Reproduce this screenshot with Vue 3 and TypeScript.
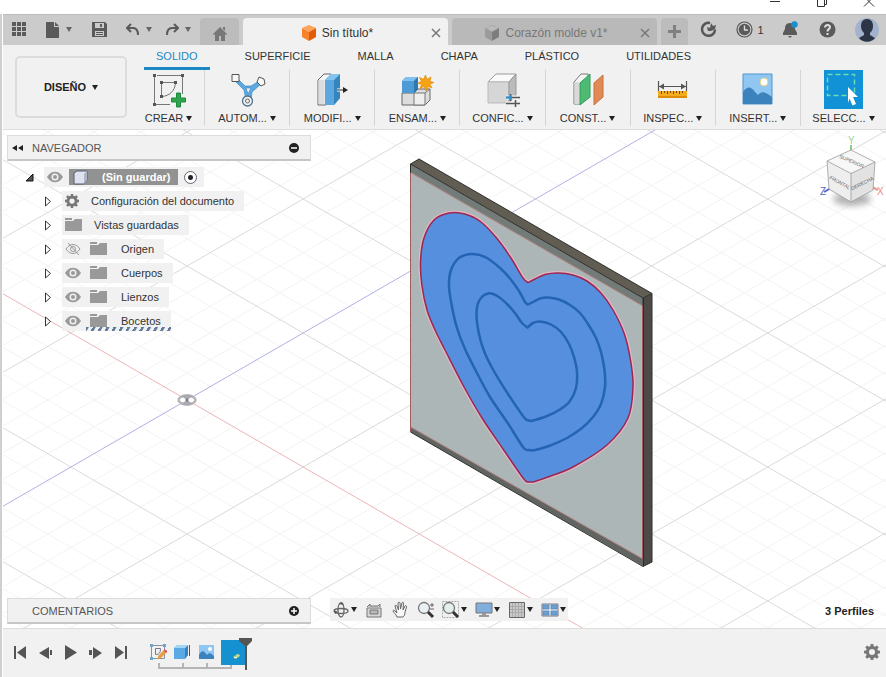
<script setup lang="ts">
import { ref } from 'vue'

interface Tool { label: string; icon: string }
interface Row { label: string; kind: 'gear' | 'folder'; eye?: 'on' | 'off'; gap: string; dashed?: boolean }
interface Icon { name: string; art: string; menu?: boolean }
type Point = [number, number]

const ribbonTabs: string[] = ['SOLIDO', 'SUPERFICIE', 'MALLA', 'CHAPA', 'PLÁSTICO', 'UTILIDADES']
const activeTab = ref('SOLIDO')
const rootActive = ref(true)

const gearArt =
  '<path fill-rule="evenodd" d="M6.700 0h2.600l.4 2.200 1.300.5 1.900-1.300 1.800 1.800-1.300 1.900.5 1.300 2.100.3v2.600l-2.100.4-.5 1.300 1.300 1.900-1.800 1.800-1.900-1.300-1.300.5L9.300 16H6.700l-.4-2.100-1.300-.5-1.900 1.300-1.800-1.800 1.300-1.900-.5-1.300L0 9.300V6.700l2.100-.3.5-1.300-1.300-1.900 1.800-1.800L5 2.700l1.300-.5zM8 5a3 3 0 1 0 0 6 3 3 0 0 0 0-6z"/>'

const tools: Tool[] = [
  {
    label: 'CREAR',
    icon: '<g fill="none" stroke="#777" stroke-width="1"><path d="M6.500 6v28M9 5.500h24M34.500 7v17M7 34.500h15M13.500 13v12M14 12.500h13M27.500 13C27 21 21 26 14 26.500"/></g><g fill="#555"><path d="M5 4h3v3H5zM33 4h3v3h-3zM5 33h3v3H5zM12 11h3v3h-3zM26 11h3v3h-3zM12 25h3v3h-3z"/></g><path d="M28.500 23h4v5h5v4h-5v5h-4v-5h-5v-4h5z" fill="#2ea44f" stroke="#1c8a3b"/>',
  },
  {
    label: 'AUTOM',
    icon: '<path d="M9 7l9 9h6l8-5 2 3-9 8-1 8h-5l-2-10L7 10zM19 18l2 6 3-6z" fill="#5ba9e0" fill-rule="evenodd" stroke="#3c8cc4" stroke-width=".7"/><path d="M5 4.500h7v7H5zM32 7l5 2 1 5-4 2-4-4z" fill="#f7f7f7" stroke="#555"/><circle cx="20.500" cy="31" r="5" fill="#f0f3f6" stroke="#52718a" stroke-width="1.300"/><circle cx="20.500" cy="31" r="2" fill="none" stroke="#666"/>',
  },
  {
    label: 'MODIFI',
    icon: '<path d="M6 10l6-6h7v25l-5 6H6z" fill="#f5f5f5" stroke="#666"/><path d="M6.500 10h6v24h-6z" fill="#dcdcdc"/><path d="M13 10l6-6h9v24l-6 7h-9z" fill="#5ba7df"/><path d="M22 10l6-6v24l-6 7z" fill="#3586bd"/><path d="M13 10l6-6h9l-6 6z" fill="#82c4ef"/><path d="M25 20h8" stroke="#fff" stroke-width="3"/><path d="M25 20h7" stroke="#222"/><path d="M31 17l5 3-5 3z" fill="#222"/>',
  },
  {
    label: 'ENSAM',
    icon: '<path d="M5 23h12l4-4h12v11l-5 5H5z" fill="#ddd" stroke="#666"/><path d="M17 23h11v12H17zM28 23l5-4" fill="#efefef" stroke="#777"/><path d="M5 11l4-4h12v11l-4 5H5z" fill="#4c9bd6"/><path d="M5 11l4-4h12l-4 4z" fill="#7fc0ec"/><path d="M17 11l4-4v12l-4 4z" fill="#2e79af"/><path d="M28.500 5l1.500 4.300 4-2.300-1 4.300 4 1.200-4 1.500 2 4-4-1.500-2 4.500-2-4.500-4 2 1.500-4-4-1.500 4-1.500-2-4 4 1.800z" fill="#f5a313" stroke="#da8705" stroke-width=".6"/>',
  },
  {
    label: 'CONFIC',
    icon: '<path d="M6 12l8-8h20l-7 8z" fill="#fafafa" stroke="#999"/><path d="M6 12h21v21H6z" fill="#d6d6d6" stroke="#bbb"/><path d="M27 12l7-8v21l-7 8z" fill="#bbb" stroke="#999"/><path d="M24 27.500h14M24 33.500h14" stroke="#f1f1f1" stroke-width="4"/><path d="M24 27.500h14M24 33.500h14M28.500 24v7M33.500 30v7" stroke="#555" stroke-width="1.500"/><path d="M24 27.500h6M28.500 25v5" stroke="#2b8cc9" stroke-width="2"/>',
  },
  {
    label: 'CONST',
    icon: '<path d="M7 12l7-8h7v22l-7 8H7z" fill="#f5f5f5" stroke="#777"/><path d="M7.500 12h5v22h-5z" fill="#d9d9d9"/><path d="M13 13l10-9v23l-10 8z" fill="#4dbb73" stroke="#329a56"/><path d="M27 13l9-8v22l-9 8z" fill="#e18a55" stroke="#c9713d"/>',
  },
  {
    label: 'INSPEC',
    icon: '<path d="M6.500 11v11M34.500 11v11M7 16.500h27" fill="none" stroke="#555" stroke-width="1.200"/><path d="M7 16.500l5-3v6zM34 16.500l-5-3v6z" fill="#555"/><path d="M6 21h29v7H6z" fill="#f5ab1e"/><path d="M6 26h29v2H6z" fill="#db8c08"/><path d="M9.500 21v3M12.500 21v2M15.500 21v3M18.500 21v2M21.500 21v3M24.500 21v2M27.500 21v3M30.500 21v2" stroke="#704a00"/>',
  },
  {
    label: 'INSERT',
    icon: '<path d="M6 4h29v30H6z" fill="#8fc7f2" stroke="#4f97cf"/><circle cx="27" cy="12" r="4" fill="#fff" stroke="#e8cf86"/><path d="M6 22c4-6 8-6 12 0l3 3c3-4 7-4 14 2v7H6z" fill="#3c82bd"/>',
  },
  {
    label: 'SELECC',
    icon: '<path d="M1 0h39v39H1z" fill="#1191d6"/><path d="M4.500 4.500h27v21h-27z" fill="none" stroke="#6cdcb5" stroke-width="1.500" stroke-dasharray="5 3"/><path d="M25 17l10 10h-5l3 7-3.500 1.500-3-7L25 33z" fill="#fff"/>',
  },
]

const rows: Row[] = [
  { label: 'Configuración del documento', kind: 'gear', gap: 'wide' },
  { label: 'Vistas guardadas', kind: 'folder', gap: 'wide' },
  { label: 'Origen', kind: 'folder', eye: 'off', gap: 'wider' },
  { label: 'Cuerpos', kind: 'folder', eye: 'on', gap: 'wider' },
  { label: 'Lienzos', kind: 'folder', eye: 'on', gap: 'wider' },
  { label: 'Bocetos', kind: 'folder', eye: 'on', gap: 'wider', dashed: true },
]

const viewTools: Icon[] = [
  { name: 'Órbita', menu: true, art: '<g fill="none" stroke="#666" stroke-width="1.300"><ellipse cx="9" cy="9" rx="3" ry="7"/><ellipse cx="9" cy="10" rx="7" ry="2.500"/></g><path d="M7 3l3-2 2 3zM2 9l1 4 3-2z" fill="#555"/>' },
  { name: 'Mirar a', art: '<path d="M2 7h14v9H2z" fill="#d8d8d8" stroke="#777"/><path d="M5 9h8v4H5z" fill="#b6b6bd" stroke="#777"/><path d="M2 6l3-3v2h8l2-2v3" fill="#ccc" stroke="#777"/>' },
  { name: 'Encuadre', art: '<path d="M6 16c-1-3-3-4-4-6 0-1 1-1 2 0l2 2L4 5c0-1 1-1 2 0l1.500 4L7 2c0-1 2-1 2 0l.5 6 1.500-6c0-1 2-1 1.500.5L12 9l2-4c.5-1 2 0 1.500 1L14 11c0 3-1 4-2 5z" fill="#fafafa" stroke="#666"/>' },
  { name: 'Zoom', art: '<circle cx="7" cy="7" r="5.500" fill="#eaf1f4" stroke="#777" stroke-width="1.300"/><path d="M11 11l5 5" stroke="#333" stroke-width="3"/><path d="M13 4h4M15 2v4M13 8h4" stroke="#666"/>' },
  { name: 'Ajustar', menu: true, art: '<path d="M.5.5h16v16H.5z" fill="none" stroke="#aaa" stroke-dasharray="2 1"/><circle cx="7" cy="7" r="5.500" fill="#e3efee" stroke="#777" stroke-width="1.300"/><path d="M11 11l5 5" stroke="#333" stroke-width="3"/>' },
  { name: 'Visualización', menu: true, art: '<path d="M1 2h16v10H1z" fill="#82aedc" stroke="#777"/><path d="M7 12h4v2h3v2H4v-2h3z" fill="#999"/>' },
  { name: 'Rejilla', menu: true, art: '<path d="M1.500 1.500h15v15h-15z" fill="#c9c9c9" stroke="#666"/><path d="M4.500 2v14M7.500 2v14M10.500 2v14M13.500 2v14M2 5.500h14M2 8.500h14M2 11.500h14" stroke="#aaa"/>' },
  { name: 'Ventanas', menu: true, art: '<path d="M1 3h16v12H1z" fill="#dce4ec" stroke="#778"/><path d="M2 4h6v4H2zM10 4h6v4h-6zM2 10h6v4H2zM10 10h6v4h-6z" fill="#6f9fd0" stroke="#4d7fae" stroke-width=".6"/>' },
]

const playback: Icon[] = [
  { name: 'Inicio', art: '<path d="M2 2h2v13H2zM14 2v13L5 8.500z"/>' },
  { name: 'Paso atrás', art: '<path d="M12 3v12L2 9zM13 6h2v5h-2z"/>' },
  { name: 'Reproducir', art: '<path d="M3 1v15l12-7.500z"/>' },
  { name: 'Paso adelante', art: '<path d="M6 3v12l9-6zM2 6h3v5H2z"/>' },
  { name: 'Final', art: '<path d="M3 2v13l9-6.500zM13 2h2v13h-2z"/>' },
]

const features: Icon[] = [
  { name: 'Boceto', art: '<path d="M2.500 2.500h13v13h-13z" fill="none" stroke="#8593a5"/><path d="M1 1h3v3H1zM14 1h3v3h-3zM1 14h3v3H1z" fill="#6fa6cc"/><path d="M6.500 5.500h5c0 4-1 6-5 6z" fill="none" stroke="#778"/><path d="M9 13l6-6 3 2-6 6-3 1z" fill="#eb9b42"/><path d="M15 7l3 2" stroke="#d55" stroke-width="2"/>' },
  { name: 'Extrusión', art: '<path d="M1 5l3-3h11l-3 3v11H1z" fill="#5aa9e4"/><path d="M12 5l3-3v10l-3 4z" fill="#3683bd"/><path d="M1 5l3-3h11l-3 3z" fill="#a3d4f4"/><path d="M16.500 2v11" stroke="#555"/>' },
  { name: 'Lienzo', art: '<path d="M2 2h15v14H2z" fill="#8fc7f2"/><circle cx="13" cy="6" r="2" fill="#fff"/><path d="M2 12c3-6 5-4 8 0 2-3 4-2 7 1v3H2z" fill="#3c82bd"/>' },
]

/* The floor grid: a heavier line every five cells, both directions through the origin. */
const originX = 184
const originY = 270
const block = 134
const slope = 0.577
const reach = 2400
interface Line { d: string; cls: string }
const gridLines: Line[] = []
for (let n = -60; n <= 60; n++) {
  const y = originY + (n * block) / 5
  const cls = n % 5 === 0 ? 'major' : 'minor'
  for (const dir of [1, -1]) {
    const left = y - dir * slope * originX
    const right = y + dir * slope * (reach - originX)
    const axis = n === 0 ? (dir === 1 ? 'axis-x' : 'axis-z') : cls
    gridLines.push({ d: `M0 ${left.toFixed(1)}L${reach} ${right.toFixed(1)}`, cls: axis })
  }
}
const rank = (c: string) => (c === 'minor' ? 0 : c === 'major' ? 1 : 2)
gridLines.sort((a, b) => rank(a.cls) - rank(b.cls))

/* Each heart is two open splines that meet at its notch and its tip. */
function spline(p: Point[]): string {
  let d = ''
  for (let i = 0; i < p.length - 1; i++) {
    const a = p[Math.max(i - 1, 0)]
    const b = p[i]
    const c = p[i + 1]
    const e = p[Math.min(i + 2, p.length - 1)]
    d += `C${b[0] + (c[0] - a[0]) / 6} ${b[1] + (c[1] - a[1]) / 6} ${c[0] - (e[0] - b[0]) / 6} ${c[1] - (e[1] - b[1]) / 6} ${c[0]} ${c[1]}`
  }
  return d
}
function heart(right: Point[], left: Point[]): string {
  return `M${right[0].join(' ')}${spline(right)}L${left[0].join(' ')}${spline(left)}z`
}

const outerHeart = heart(
  [[528, 282.5], [535, 279], [545, 274.5], [558, 273], [573, 275], [587, 281], [601, 293], [613, 310], [624, 333], [630.5, 360], [633, 387], [628, 418], [607, 445], [573, 467], [548, 477], [533, 482]],
  [[528, 482], [523, 478], [503, 449], [482, 418], [464, 387], [445, 350], [435, 330], [427, 310], [422, 286], [420.5, 262], [424, 238], [434, 220], [449, 213], [465, 214], [481, 222], [497, 238.5], [511, 258], [523, 278], [528, 282.5]],
)
const middleHeart = heart(
  [[528, 304.5], [533, 302], [540, 298.5], [548, 297.5], [559, 299.5], [570, 305], [580, 313], [588, 324], [596, 338], [601, 352], [604.5, 370], [605, 387], [601, 404], [593, 417], [582, 428], [567, 438], [549, 446], [533, 450.5]],
  [[528, 450], [523, 447], [507, 422], [490, 397], [477, 373], [465, 349], [457, 328], [452, 307], [449, 286], [451, 270], [459, 258], [472, 254], [486, 257.5], [500, 268], [510, 278.5], [519, 291], [525, 302], [528, 304.5]],
)
const innerHeart = heart(
  [[527.5, 327.5], [533, 323], [540, 321.5], [551, 324.5], [561, 332], [569, 344], [574, 357], [577, 372], [576, 388], [570, 401], [560, 409.5], [546, 416.5], [531, 421]],
  [[527, 420], [523, 416], [508, 394], [493, 369.5], [484, 351], [479, 334], [476.5, 315], [479, 301], [488, 293.5], [498, 296.5], [508, 305], [516, 314.5], [522, 323], [527.5, 327.5]],
)
</script>

<template>
  <div class="app">
    <header class="window-bar">
      <button aria-label="Minimizar"><svg width="12" height="8"><path d="M1 1.500h10" /></svg></button>
      <button aria-label="Restaurar"><svg width="12" height="8"><path d="M1.500 0v6.500h7V0M8.500 4.500h2V0" /></svg></button>
      <button aria-label="Cerrar"><svg width="12" height="8"><path d="M1 6.500L7.500 0M11 6.500L4.500 0" /></svg></button>
    </header>

    <div class="frame">
      <div class="app-bar">
        <div class="quick">
          <button aria-label="Panel de datos">
            <svg width="15" height="15"><path d="M0 0h4v4H0zM5 0h4v4H5zM10 0h4v4h-4zM0 5h4v4H0zM5 5h4v4H5zM10 5h4v4h-4zM0 10h4v4H0zM5 10h4v4H5zM10 10h4v4h-4z" /></svg>
          </button>
          <button class="with-caret" aria-label="Archivo">
            <svg width="14" height="16"><path d="M0 0h8v5h5v11H0zM9 0l4 4H9z" /></svg><i class="caret soft"></i>
          </button>
          <button aria-label="Guardar">
            <svg width="15" height="15"><path fill-rule="evenodd" d="M0 0h13l2 2v13H0zM3 1v5h9V1zM3 9v5h9V9zM8 2h2v3H8zM4 10h7v1H4zM4 12h7v1H4z" /></svg>
          </button>
          <div class="undo-redo">
            <button class="with-caret" aria-label="Deshacer">
              <svg width="14" height="13"><path d="M5 1L1 5l4 4M1 5h6c4 0 5 3 5 7" class="arrow" /></svg><i class="caret soft"></i>
            </button>
            <button class="with-caret" aria-label="Rehacer">
              <svg width="14" height="13"><path d="M9 1l4 4-4 4M13 5H7c-4 0-5 3-5 7" class="arrow" /></svg><i class="caret soft"></i>
            </button>
          </div>
        </div>
        <button class="home" aria-label="Inicio">
          <svg width="16" height="15"><path d="M8 1l7 7-1 1-1-1v7H9v-5H7v5H3V8L2 9 1 8zM11 1h2v4l-2-2z" /></svg>
        </button>
        <div class="doc active">
          <a href="#" class="doc-name">
            <svg width="16" height="16"><path d="M8 0l7 3-7 4-7-4z" fill="#ffa35c" /><path d="M1 3l7 4v9l-7-4z" fill="#f7832c" /><path d="M15 3L8 7v9l7-4z" fill="#e35d06" /></svg>
            <span>Sin título*</span>
          </a>
          <button aria-label="Cerrar Sin título"><svg width="10" height="10"><path d="M1 1l8 8M9 1L1 9" /></svg></button>
        </div>
        <div class="doc">
          <a href="#" class="doc-name">
            <svg width="16" height="16"><path d="M8 0l7 3-7 4-7-4z" fill="#a9a9a9" /><path d="M1 3l7 4v9l-7-4z" fill="#9b9b9b" /><path d="M15 3L8 7v9l7-4z" fill="#7d7d7d" /><path d="M2 3l6-2 6 2-6 3z" fill="#bbb" /></svg>
            <span>Corazón molde v1*</span>
          </a>
          <button aria-label="Cerrar Corazón molde"><svg width="10" height="10"><path d="M1 1l8 8M9 1L1 9" /></svg></button>
        </div>
        <button class="plus" aria-label="Nuevo diseño"><svg width="13" height="13"><path d="M5 0h3v5h5v3H8v5H5V8H0V5h5z" /></svg></button>
        <div class="status">
          <button aria-label="Extensiones">
            <svg width="17" height="17"><path d="M10 2A6.500 6.500 0 1 0 15 8.500" fill="none" stroke="#555" stroke-width="2.500" /><path d="M8 10L7 6l3 1 1-5 2 3 3-1-1 4-4 2z" /></svg>
          </button>
          <button class="jobs" aria-label="Trabajos: 1">
            <svg width="17" height="17"><circle cx="8.500" cy="8.500" r="7.500" fill="none" stroke="#555" stroke-width="1.200" /><circle cx="8.500" cy="8.500" r="5.800" /><path d="M8.500 4.500v4.500H12" fill="none" stroke="#ddd" stroke-width="1.400" /></svg><span>1</span>
          </button>
          <button aria-label="Notificaciones">
            <svg width="16" height="17"><path d="M7 2c4 0 5 3 5 6l2 4v2H0v-2l2-4c0-3 1-6 5-6zM5 15h4l-2 2z" /><circle cx="11.500" cy="3.500" r="3.200" fill="#1a8fd0" /></svg>
          </button>
          <button aria-label="Ayuda">
            <svg width="17" height="17"><circle cx="8.500" cy="8.500" r="8" /><path d="M6 6.500C6 3 11.500 3.500 11 6.500c-.3 1.500-2.500 1.500-2.500 4M8.500 12v2" fill="none" stroke="#ddd" stroke-width="2" /></svg>
          </button>
          <button aria-label="Perfil">
            <svg width="24" height="24"><circle cx="12" cy="12" r="12" fill="#a3b3cd" /><path d="M12 1c4 0 6 3 6 7 0 3-1 5-3 7v2l5 3c-4 5-12 5-16 0l5-3v-2C7 13 6 11 6 8c0-4 2-7 6-7z" fill="#2c3446" /></svg>
          </button>
        </div>
      </div>

      <div class="ribbon">
        <button class="workspace">DISEÑO <i class="caret"></i></button>
        <div class="ribbon-main">
          <nav class="tabs">
            <button v-for="t in ribbonTabs" :key="t" :class="{ on: t === activeTab }" @click="activeTab = t">{{ t }}</button>
          </nav>
          <div class="tools">
            <button v-for="(t, i) in tools" :key="t.label" class="tool">
              <svg width="41" height="39" v-html="t.icon"></svg>
              <span class="tool-label">{{ i > 0 ? t.label + '...' : t.label }}<i class="caret"></i></span>
            </button>
          </div>
        </div>
      </div>

      <main class="viewport">
        <svg class="scene" width="100%" height="100%" aria-hidden="true">
          <path v-for="(l, i) in gridLines" :key="i" :d="l.d" :class="l.cls" />
          <g transform="translate(-3 -130)">
            <ellipse cx="187" cy="400" rx="8.500" ry="4.500" fill="#fff" stroke="#b5b5b5" stroke-width="2.500" />
            <path d="M187 400l-6-4q6-3 12 0zM187 400l-6 4q6 3 12 0z" fill="#a9a9b2" />
            <circle cx="187" cy="400" r="1.500" fill="#77777f" />

            <path d="M410.500 164L643 298v268L410.500 432z" fill="#adb6b6" />
            <path d="M410.500 164L643 298v8L410.500 172z" fill="#727b78" />
            <path d="M410.500 427L643 559v7L410.500 432z" fill="#616562" />
            <path d="M410.500 164L419 159 652 293.500 643 298z" fill="#625d53" />
            <path d="M643 298l9-4.500V562l-9 4.500z" fill="#4c4946" />
            <path d="M410.500 172.500L643 306M410.500 427L643 559" class="sketch-line" />
            <path d="M410.500 164v268M642.500 306v253" class="red-edge" />
            <path d="M410.500 173v-9L419 159 652 293.500V562l-9 4.500L410.500 432M410.500 164L643 298v8M643 298l9-4.500" class="dark-edge" />
            <path d="M643.500 298v268" stroke="#2e2926" />

            <path class="halo" :d="outerHeart" />
            <path class="heart" :d="outerHeart" />
            <path class="groove" :d="middleHeart" />
            <path class="groove" :d="innerHeart" />
          </g>
        </svg>

        <div class="upper">
          <aside class="browser">
            <div class="panel">
              <button aria-label="Contraer"><svg width="11" height="8"><path d="M5 1v6L0 4zM11 1v6L6 4z" fill="#222" /></svg></button>
              <span class="panel-title">NAVEGADOR</span>
              <button aria-label="Opciones"><svg width="10" height="10"><circle cx="5" cy="5" r="5" fill="#222" /><path d="M2 5h6" stroke="#fff" stroke-width="1.500" /></svg></button>
            </div>
            <ul class="tree">
              <li class="root">
                <button aria-label="Plegar"><svg width="9" height="9"><path d="M8 1v7H1z" fill="#555" stroke="#111" /></svg></button>
                <div class="chip root-chip">
                  <svg class="eye" width="16" height="12"><path d="M0 6c4-7 12-7 16 0-4 7-12 7-16 0z" /><circle cx="8" cy="6" r="3.500" fill="#f1f1f1" /><circle cx="8" cy="6" r="2" /></svg>
                  <span class="root-name">
                    <svg width="15" height="15"><path d="M1 3l3-2h10v9l-3 4H1z" fill="#dfe3ee" stroke="#555f78" /><path d="M11 4l3-3v9l-3 4z" fill="#aeb5c8" /></svg>
                    <span>(Sin guardar)</span>
                  </span>
                  <input v-model="rootActive" type="radio" name="component" :value="true" aria-label="Activar componente" />
                </div>
              </li>
              <li v-for="r in rows" :key="r.label">
                <button aria-label="Desplegar"><svg width="8" height="11"><path d="M1.500 1v9L6.500 5.500z" fill="#fff" stroke="#333" /></svg></button>
                <div class="chip" :class="[r.gap, { dashed: r.dashed }]">
                  <svg v-if="r.eye === 'on'" class="eye" width="16" height="12"><path d="M0 6c4-7 12-7 16 0-4 7-12 7-16 0z" /><circle cx="8" cy="6" r="3.500" fill="#f1f1f1" /><circle cx="8" cy="6" r="2" /></svg>
                  <svg v-if="r.eye === 'off'" class="eye off" width="16" height="12"><path d="M1 6c4-6 10-6 14 0-4 6-10 6-14 0zM3 0l11 12" /><circle cx="8" cy="6" r="2.500" /></svg>
                  <svg v-if="r.kind === 'gear'" class="small-gear" width="14" height="14" viewBox="0 0 16 16" v-html="gearArt"></svg>
                  <svg v-else class="folder" width="17" height="14"><path d="M0 0h7v2H0zM0 3h8l2-2h7v12H0z" /></svg>
                  <span class="row-name">{{ r.label }}</span>
                </div>
              </li>
            </ul>
          </aside>

          <svg class="cube" width="66" height="76" viewBox="820 134 66 76">
            <defs>
              <filter id="soft" x="-50%" y="-50%" width="200%" height="200%"><feGaussianBlur stdDeviation="3" /></filter>
            </defs>
            <ellipse cx="852" cy="198" rx="19" ry="7" fill="#777" opacity=".55" filter="url(#soft)" />
            <path d="M851 151v-7" stroke="#86d08c" stroke-width="2" />
            <path d="M831 187l-7 4" stroke="#5966c9" stroke-width="2" />
            <path d="M872 186l6 3" stroke="#e99" stroke-width="2" />
            <path d="M851 149l24 12-24 11.500L827 160z" fill="#f7f7f7" />
            <path d="M827 160l24 12.500V201l-22-13z" fill="#eee" />
            <path d="M875 161l-24 11.500V201l22-12z" fill="#e2e2e2" />
            <path d="M851 149l24 12-2 28-22 12-22-13-2-28zM827 160l24 12.500L875 161M851 172.500V201" fill="none" stroke="#9a9a9a" stroke-width=".8" />
            <g font-size="5" fill="#666" text-anchor="middle">
              <text transform="translate(851 162) rotate(24)">SUPERIOR</text>
              <text transform="translate(839 183) rotate(29)">FRONTAL</text>
              <text transform="translate(863 184) rotate(-27)">DERECHA</text>
            </g>
            <text x="848" y="143" font-size="10" fill="#9ad7a0">Y</text>
            <text x="820" y="194" font-size="10" fill="#5966c9">Z</text>
            <text x="877" y="194" font-size="10" fill="#e58c8c">X</text>
          </svg>
        </div>

        <div class="lower">
          <div class="panel comments">
            <span class="panel-title">COMENTARIOS</span>
            <button aria-label="Añadir comentario"><svg width="10" height="10"><circle cx="5" cy="5" r="5" fill="#222" /><path d="M2 5h6M5 2v6" stroke="#fff" stroke-width="1.500" /></svg></button>
          </div>
          <div class="view-bar">
            <button v-for="v in viewTools" :key="v.name" :aria-label="v.name">
              <svg width="18" height="18" v-html="v.art"></svg><i v-if="v.menu" class="caret"></i>
            </button>
          </div>
          <span class="selection">3 Perfiles</span>
        </div>
      </main>

      <footer class="timeline">
        <div class="playback">
          <button v-for="p in playback" :key="p.name" :aria-label="p.name"><svg width="17" height="17" v-html="p.art"></svg></button>
        </div>
        <div class="history">
          <svg class="bracket" width="92" height="34" aria-hidden="true"><path d="M10 23v4M34 23v4M58 23v4M9 28h74M82 25v3" /></svg>
          <button v-for="f in features" :key="f.name" :aria-label="f.name"><svg width="18" height="18" v-html="f.art"></svg></button>
          <button class="current" aria-label="Boceto actual">
            <svg width="25" height="25"><path d="M12 17l4-3 3 2-4 3z" fill="#9ed36b" /><path d="M13 18l3-1" stroke="#fff" /><path d="M16 14l3 1-2 2z" fill="#e9e3a0" /></svg>
          </button>
          <svg class="marker" width="13" height="33" aria-hidden="true"><path d="M0 0h13v3L8 8v24H6V8L0 3z" /></svg>
        </div>
        <button class="settings" aria-label="Configuración"><svg width="16" height="16" viewBox="0 0 16 16" v-html="gearArt"></svg></button>
      </footer>
    </div>
  </div>
</template>

<style>
body {
  margin: 0;
}
</style>

<style scoped>
.app {
  display: flex;
  flex-direction: column;
  min-height: 100vh;
  background: #fff;
  color: #333;
  font-family: "Liberation Sans", Arial, sans-serif;
  font-size: 11px;
}
button {
  display: flex;
  align-items: center;
  justify-content: center;
  margin: 0;
  padding: 0;
  border: 0;
  background: none;
  color: inherit;
  font: inherit;
}
svg {
  display: block;
  flex: none;
}
.caret {
  flex: none;
  border: 3px solid transparent;
  border-top: 5px solid #222;
  border-bottom: 0;
}
.caret.soft {
  border-top-color: #666;
}
.window-bar {
  display: flex;
  justify-content: flex-end;
  align-items: flex-start;
  gap: 17px;
  height: 14px;
  padding-right: 2px;
}
.window-bar button {
  width: 30px;
}
.window-bar path {
  fill: none;
  stroke: #333;
}
.frame {
  display: flex;
  flex: 1;
  flex-direction: column;
  border-left: 2px solid #cfcfcf;
  padding-left: 1px;
}
.app-bar {
  display: flex;
  align-items: flex-end;
  height: 31px;
  background: #cbcbcb;
  box-shadow: inset 0 1px #bdbdbd;
  fill: #5a5a5a;
}
.quick {
  display: flex;
  align-items: center;
  justify-content: space-between;
  align-self: stretch;
  width: 179px;
  padding: 0 9px;
}
.undo-redo {
  display: flex;
  gap: 13px;
}
.with-caret {
  gap: 6px;
}
.arrow {
  fill: none;
  stroke: #5a5a5a;
  stroke-width: 2;
}
.home,
.plus {
  height: 27px;
  border-radius: 4px 4px 0 0;
  background: #bcbcbc;
}
.home {
  width: 39px;
  margin-right: 4px;
  padding-top: 4px;
  fill: #777;
}
.plus {
  width: 27px;
  fill: #808080;
}
.doc {
  display: flex;
  flex: 1;
  align-items: center;
  height: 27px;
  margin-right: 4px;
  padding: 3px 7px 0 0;
  box-sizing: border-box;
  border-radius: 4px 4px 0 0;
  background: #b9b9b9;
  color: #777;
  font-size: 12px;
}
.doc.active {
  background: #f1f1f1;
  color: #333;
}
.doc button path {
  fill: none;
  stroke: #777;
  stroke-width: 1.5;
}
.doc-name {
  display: flex;
  flex: 1;
  align-items: center;
  justify-content: center;
  gap: 5px;
  color: inherit;
  text-decoration: none;
  white-space: nowrap;
}
.status {
  display: flex;
  align-items: center;
  align-self: stretch;
  justify-content: space-between;
  width: 179px;
  margin-left: 12px;
  padding-right: 7px;
}
.jobs {
  gap: 4px;
}
.ribbon {
  display: flex;
  height: 84px;
  background: #f1f1f1;
  border-bottom: 1px solid #ddd;
}
.workspace {
  gap: 6px;
  width: 112px;
  height: 62px;
  margin: 11px 0 0 12px;
  border: 2px solid #dcdcdc;
  border-radius: 5px;
  font-weight: bold;
  color: #222;
}
.ribbon-main {
  flex: 1;
  min-width: 0;
}
.tabs {
  display: flex;
  gap: 23px;
  height: 25px;
  padding-left: 17px;
}
.tabs button {
  padding: 0 12px;
  border-bottom: 3px solid transparent;
}
.tabs .on {
  border-bottom-color: #1c87c4;
  color: #1c87c4;
}
.tools {
  display: grid;
  grid-template-columns: 78px repeat(8, minmax(0, 1fr));
  height: 56px;
}
.tool {
  flex-direction: column;
  justify-content: flex-start;
  gap: 2px;
  border-right: 1px solid #d5d5d5;
}
.tool:first-child {
  padding-left: 6px;
}
.tool:last-child {
  border-right: 0;
}
.tool-label {
  display: flex;
  align-items: center;
  gap: 3px;
  height: 14px;
  white-space: nowrap;
}
.viewport {
  position: relative;
  display: flex;
  flex: 1;
  flex-direction: column;
  justify-content: space-between;
  overflow: hidden;
  padding: 5px 0 4px 4px;
}
.scene {
  position: absolute;
  inset: 0;
}
.minor {
  stroke: #f3f3f3;
}
.major {
  stroke: #dadada;
}
.axis-x {
  stroke: #eeb4b4;
}
.axis-z {
  stroke: #b0b0e6;
}
.sketch-line {
  stroke: #b07f7f;
}
.red-edge {
  stroke: #a35a60;
}
.dark-edge {
  fill: none;
  stroke: #2d302e;
}
.halo {
  fill: none;
  stroke: #e4b6c4;
  stroke-width: 4;
}
.heart {
  fill: #568fdd;
  stroke: #9a2850;
  stroke-width: 1.5;
}
.groove {
  fill: none;
  stroke: #2464b4;
  stroke-width: 2.5;
}
.upper {
  position: relative;
  display: flex;
  justify-content: space-between;
  align-items: flex-start;
}
.browser {
  width: 304px;
}
.panel {
  display: flex;
  align-items: center;
  width: 304px;
  height: 26px;
  box-sizing: border-box;
  padding: 0 11px 0 4px;
  border: 1px solid #dcdcdc;
  border-bottom: 2px solid #c6c6c6;
  background: #f1f1f1;
  color: #555;
}
.panel-title {
  flex: 1;
  margin-left: 9px;
}
.comments .panel-title {
  margin-left: 20px;
}
.tree {
  display: flex;
  flex-direction: column;
  gap: 4px;
  margin: 6px 0 0;
  padding: 0;
  list-style: none;
}
.tree li {
  display: flex;
  align-items: center;
  gap: 10px;
  padding-left: 36px;
  height: 20px;
}
.tree li > button {
  width: 9px;
}
.tree .root {
  padding-left: 18px;
}
.chip {
  display: flex;
  align-items: center;
  gap: 9px;
  height: 20px;
  padding: 0 10px 0 3px;
  background: #f1f1f1;
}
.eye {
  fill: #999;
}
.eye.off {
  fill: none;
  stroke: #999;
}
.folder {
  fill: #999;
}
.small-gear {
  fill: #777;
}
.wide .row-name {
  margin-left: 3px;
}
.wider .row-name {
  margin-left: 5px;
}
.dashed {
  background: repeating-linear-gradient(120deg, #5f7a9c 0 2px, #f1f1f1 3px 6px) 24px 100% / 100% 4px no-repeat #f1f1f1;
}
.root-chip {
  gap: 6px;
  padding-right: 7px;
}
.root-name {
  display: flex;
  align-items: center;
  gap: 14px;
  height: 16px;
  padding: 0 8px 0 4px;
  background: #929292;
  color: #fff;
  font-weight: bold;
}
input[type="radio"] {
  width: 13px;
  height: 13px;
  margin: 0;
  border: 1px solid #667;
  border-radius: 50%;
  appearance: none;
  background: radial-gradient(#222 0 2px, #fff 3px);
}
.lower {
  position: relative;
  display: flex;
  align-items: flex-start;
}
.view-bar {
  display: flex;
  align-items: center;
  justify-content: space-between;
  width: 234px;
  height: 23px;
  margin-left: 19px;
  padding: 0 2px;
  background: #f1f1f1;
}
.view-bar button {
  gap: 1px;
}
.selection {
  margin: 7px 12px 0 auto;
  font-weight: bold;
  color: #222;
}
.timeline {
  display: flex;
  align-items: center;
  height: 46px;
  padding-bottom: 2px;
  border-top: 1px solid #ddd;
  background: #f1f1f1;
  fill: #555;
}
.playback {
  display: flex;
  gap: 8px;
  margin-left: 9px;
}
.history {
  position: relative;
  display: flex;
  align-items: center;
  gap: 6px;
  margin-left: 20px;
}
.current {
  background: #1590d0;
}
.bracket {
  position: absolute;
  top: 0;
  left: 0;
  fill: none;
  stroke: #b5b5b5;
  stroke-width: 2;
}
.marker {
  position: absolute;
  top: -2px;
  right: -6px;
}
.settings {
  margin-left: auto;
  margin-right: 6px;
  fill: #777;
}
</style>
